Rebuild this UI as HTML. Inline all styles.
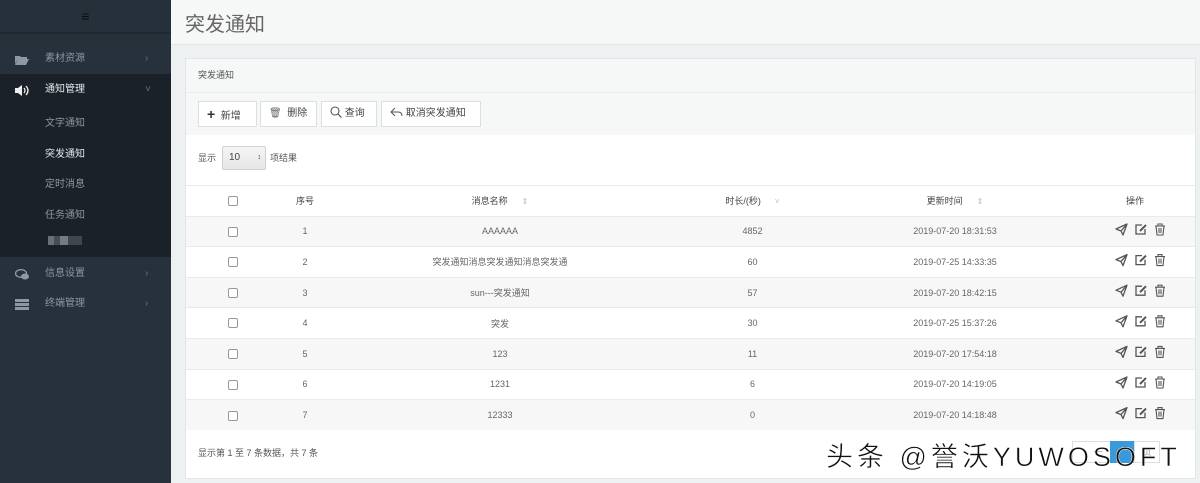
<!DOCTYPE html>
<html><head><meta charset="utf-8">
<style>
*{margin:0;padding:0;box-sizing:border-box}
body{width:1200px;height:483px;overflow:hidden;background:#eef1f2;font-family:"Liberation Sans","Noto Sans CJK SC",sans-serif;position:relative}
.sb{position:absolute;left:0;top:0;width:171px;height:483px;background:#27313b}
.sb .top{height:34px;background:#26303a;border-bottom:2px solid #1f272f;text-align:center;color:#0b0f13;font-size:14px;line-height:32px}
.mi{position:absolute;left:0;width:171px;height:30px;font-size:10px;color:#8c96a0;line-height:30px}
.mi .t{position:absolute;left:45px}
.mi .ar{position:absolute;left:145px;font-size:10px;color:#6a737c}
.act{position:absolute;left:0;top:74px;width:171px;height:183px;background:#1b2129}
.sub{position:absolute;left:45px;font-size:10px;color:#8c96a0}
.main{position:absolute;left:171px;top:0;right:0;height:45px;background:#f6f7f7;border-bottom:1px solid #e4e7e8}
.main h1{position:absolute;left:14px;top:8px;font-size:20px;font-weight:normal;color:#666}
.panel{position:absolute;left:185px;top:58px;width:1011px;height:421px;background:#fff;border:1px solid #e3e6e7}
.ph{height:34px;background:#f6f7f7;border-bottom:1px solid #eceeee;font-size:9px;color:#555;line-height:33px;padding-left:12px}
.tb{height:42px;background:#f6f7f7;position:relative}
.btn{position:absolute;top:8px;height:26px;background:#fff;border:1px solid #dcdfe0;font-size:10px;color:#444;line-height:24px;padding-left:8px}
.len{position:absolute;left:12px;top:92px;font-size:9px;color:#555}
.sel{position:absolute;left:36px;top:87px;width:44px;height:24px;border:1px solid #cfd2d3;border-radius:2px;background:linear-gradient(#f5f5f5,#e6e6e6);font-size:10px;line-height:22px;padding-left:6px;color:#444}
table{position:absolute;left:0;top:126px;width:1009px;border-collapse:collapse;font-size:9px;color:#666}
td,th{height:30.6px;text-align:center;border-top:1px solid #e9ebeb;font-weight:normal}
th{color:#444}
tr:nth-child(even) td{background:#f7f7f7}
.cb{display:inline-block;width:10px;height:10px;border:1px solid #999;border-radius:2px;background:#fff;vertical-align:middle}
.foot{position:absolute;left:12px;top:387px;font-size:9px;color:#555}
.wm{position:absolute;left:826px;top:435px;font-size:27px;color:#111;letter-spacing:4px;font-family:"Liberation Sans","Noto Sans CJK SC",sans-serif;-webkit-text-stroke:0.5px #fff;white-space:nowrap}
.pg{position:absolute;top:441px;height:22px;background:#3a9ad9}
.pg2{position:absolute;top:441px;width:18px;height:22px;border:1px solid #ddd;background:#fff;font-size:9px;color:#999;line-height:20px;text-align:center}
.srt{color:#bbb;font-size:8px;margin-left:14px}
</style></head><body>
<div class="sb">
<div class="top">&#8801;</div>
<div class="mi" style="top:44px"><svg style="position:absolute;left:15px;top:11px" width="14" height="10"><path d="M0 1h5l1 1h6v2H3L0 9z" fill="#8d98a3"/><path d="M3 4h11l-3 6H0z" fill="#8d98a3"/></svg><span class="t">素材资源</span><span class="ar">›</span></div>
<div class="act"></div>
<div class="mi" style="top:75px;color:#e6e9ec"><svg style="position:absolute;left:15px;top:10px" width="16" height="11"><path d="M0 3h3l4-3v11L3 8H0z" fill="#eee"/><path d="M9 3q2 2.5 0 5M11 1q4 4.5 0 9" stroke="#eee" fill="none" stroke-width="1.3"/></svg><span class="t">通知管理</span><span class="ar">˅</span></div>
<div class="sub" style="top:114px">文字通知</div>
<div class="sub" style="top:145px;color:#e6e9ec">突发通知</div>
<div class="sub" style="top:175px">定时消息</div>
<div class="sub" style="top:206px">任务通知</div>
<div style="position:absolute;left:48px;top:236px;width:34px;height:9px;background:linear-gradient(90deg,#8a929a 0 6px,#59626b 6px 12px,#9aa2aa 12px 20px,#4d565f 20px 34px);opacity:.7"></div>
<div class="mi" style="top:259px"><svg style="position:absolute;left:15px;top:10px" width="15" height="11"><ellipse cx="6" cy="4.5" rx="5.5" ry="3.8" fill="none" stroke="#8d98a3" stroke-width="1.4"/><ellipse cx="10" cy="7.5" rx="4" ry="3" fill="#8d98a3"/></svg><span class="t">信息设置</span><span class="ar">›</span></div>
<div class="mi" style="top:289px"><svg style="position:absolute;left:15px;top:10px" width="14" height="11"><rect y="0" width="14" height="3" fill="#8d98a3"/><rect y="4" width="14" height="3" fill="#8d98a3"/><rect y="8" width="14" height="3" fill="#8d98a3"/></svg><span class="t">终端管理</span><span class="ar">›</span></div>
</div>
<div class="main"><h1>突发通知</h1></div>
<div class="panel">
<div class="ph">突发通知</div>
<div class="tb">
<div class="btn" style="left:12px;width:59px"><b style="font-size:14px;color:#333">+</b>&nbsp; 新增</div>
<div class="btn" style="left:74px;width:57px"><span style="color:#666">&#128465;</span>&nbsp; 删除</div>
<div class="btn" style="left:135px;width:56px"><svg width="12" height="12" style="vertical-align:-2px"><circle cx="5" cy="5" r="4" fill="none" stroke="#555" stroke-width="1.1"/><path d="M8 8l3.5 3.5" stroke="#555" stroke-width="1.2"/></svg> 查询</div>
<div class="btn" style="left:195px;width:100px"><svg width="13" height="10" style="vertical-align:-1px"><path d="M5 1L1 5l4 4M1 5h7q4 0 4 4" fill="none" stroke="#555" stroke-width="1"/></svg> 取消突发通知</div>
</div>
<div class="len">显示</div><div class="sel">10<span style="position:absolute;right:4px;font-size:7px;color:#333">&#8597;</span></div><div class="len" style="left:84px">项结果</div>
<table>
<tr><th style="width:94px"><span class="cb"></span></th><th style="width:50px">序号</th><th style="width:340px">消息名称<span class="srt">&#8661;</span></th><th style="width:165px">时长/(秒)<span class="srt">&#709;</span></th><th style="width:240px">更新时间<span class="srt">&#8661;</span></th><th>操作</th></tr>
<tr><td><span class="cb"></span></td><td>1</td><td>AAAAAA</td><td>4852</td><td>2019-07-20 18:31:53</td><td></td></tr>
<tr><td><span class="cb"></span></td><td>2</td><td>突发通知消息突发通知消息突发通</td><td>60</td><td>2019-07-25 14:33:35</td><td></td></tr>
<tr><td><span class="cb"></span></td><td>3</td><td>sun---突发通知</td><td>57</td><td>2019-07-20 18:42:15</td><td></td></tr>
<tr><td><span class="cb"></span></td><td>4</td><td>突发</td><td>30</td><td>2019-07-25 15:37:26</td><td></td></tr>
<tr><td><span class="cb"></span></td><td>5</td><td>123</td><td>11</td><td>2019-07-20 17:54:18</td><td></td></tr>
<tr><td><span class="cb"></span></td><td>6</td><td>1231</td><td>6</td><td>2019-07-20 14:19:05</td><td></td></tr>
<tr><td><span class="cb"></span></td><td>7</td><td>12333</td><td>0</td><td>2019-07-20 14:18:48</td><td></td></tr>
</table>
<div class="foot">显示第 1 至 7 条数据，共 7 条</div>
</div>
<svg style="position:absolute;left:1114px;top:222px" width="56" height="200">
<defs><g id="ic">
<path d="M2 7L13 2 9 13 7 9z M7 9L13 2" fill="none" stroke="#555" stroke-width="1.3" stroke-linejoin="round"/>
<path d="M28 3h-6v9h9V7" fill="none" stroke="#555" stroke-width="1.3"/><path d="M26 9l6-6" stroke="#555" stroke-width="2"/>
<path d="M41 4h10M44 4V2h4v2M42 4l1 9h6l1-9M45 6v5M47 6v5" fill="none" stroke="#555" stroke-width="1.1"/>
</g></defs>
<use href="#ic" y="0"/><use href="#ic" y="30.6"/><use href="#ic" y="61.2"/><use href="#ic" y="91.8"/><use href="#ic" y="122.4"/><use href="#ic" y="153"/><use href="#ic" y="183.6"/>
</svg>
<div class="pg2" style="left:1072px;width:52px">一</div>
<div class="pg" style="left:1110px;width:24px"></div>
<div class="pg2" style="left:1134px;width:26px">页</div>
<div class="wm">头条 @誉沃YUWOSOFT</div>
</body></html>
